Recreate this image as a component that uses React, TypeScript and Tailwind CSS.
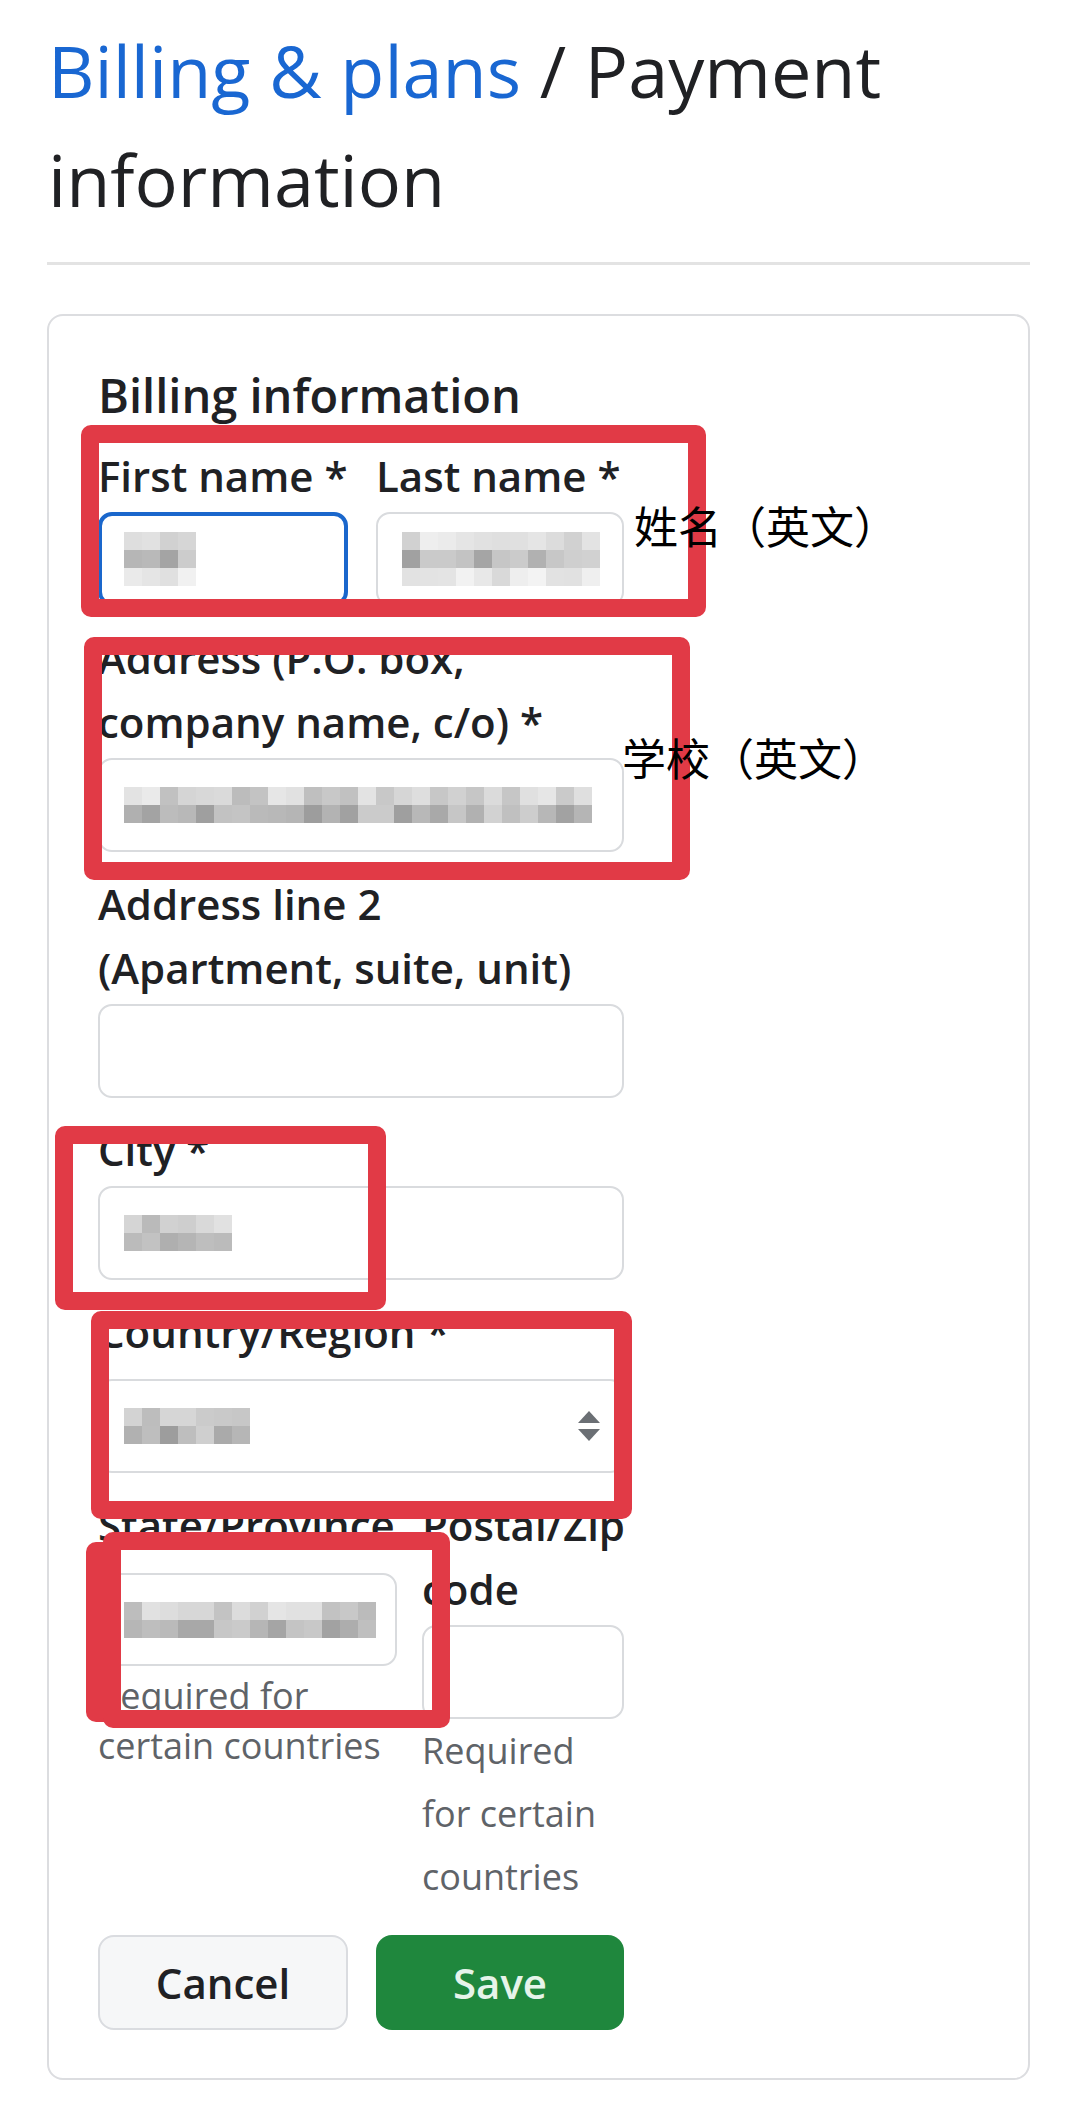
import type { ReactNode } from 'react';

// blurred (pixelated) field contents, like in the screenshot
const mosaic = (seed: number, cols: number, rows: number) => {
    let s = seed;
    const rnd = () => {
        s = (s * 9301 + 49297) % 233280;
        return s / 233280;
    };
    const bands = rows === 3 ? [[205, 240], [160, 210], [215, 248]] : [[185, 235], [155, 210]];
    return Array.from({ length: rows }, (_, r) =>
        Array.from({ length: cols }, () => {
            const [lo, hi] = bands[r];
            const v = Math.round(lo + rnd() * (hi - lo));
            return `rgb(${v},${v},${v})`;
        })
    );
};

const Mosaic = ({ seed, cols, rows }: { seed: number; cols: number; rows: number }) => (
    <div className="flex flex-col">
        {mosaic(seed, cols, rows).map((row, i) => (
            <div key={i} className="flex">
                {row.map((c, j) => (
                    <div key={j} className="w-[18px] h-[18px]" style={{ backgroundColor: c }} />
                ))}
            </div>
        ))}
    </div>
);

const Label = ({ children }: { children: ReactNode }) => (
    <div className="text-[42px] leading-[64px] font-semibold text-[#202124]">{children}</div>
);

const Field = ({ children, focused }: { children?: ReactNode; focused?: boolean }) => (
    <div
        className={
            focused
                ? 'mt-[4px] h-[94px] rounded-[14px] border-[4px] border-[#1a67cc] bg-white flex items-center pl-[22px]'
                : 'mt-[4px] h-[94px] rounded-[14px] border-2 border-[#d9dbde] bg-white flex items-center pl-[24px]'
        }
    >
        {children}
    </div>
);

const Help = ({ children, tall }: { children: ReactNode; tall?: boolean }) => (
    <div className={tall ? 'text-[36px] leading-[63px] text-[#5f6368]' : 'mt-[5px] text-[36px] leading-[50px] text-[#5f6368]'}>
        {children}
    </div>
);

export default function App() {
    return (
        <div className="relative w-[1077px] h-[2102px] overflow-hidden bg-white font-['Open_Sans','Liberation_Sans',sans-serif] text-[#202124]">
            {/* Header */}
            <h1 className="pt-[16px] pl-[48px] w-[1029px] text-[72px] leading-[109px] font-normal">
                <a className="text-[#1967d2]">Billing &amp; plans</a>
                <span> / Payment</span>
                <br />
                <span>information</span>
            </h1>
            <div className="mx-[47px] mt-[28px] h-[3px] bg-[#e3e3e3]" />

            {/* Card */}
            <div className="mx-[47px] mt-[49px] border-2 border-[#dcdde0] rounded-[16px] pl-[49px] pt-[48px] pb-[48px]">
                <div className="w-[526px]">
                    <h2 className="text-[47px] leading-[63px] font-semibold">Billing information</h2>

                    <div className="mt-[17px] grid grid-cols-[250px_248px] gap-x-[28px]">
                        <div>
                            <Label>First name *</Label>
                            <Field focused>
                                <Mosaic seed={7} cols={4} rows={3} />
                            </Field>
                        </div>
                        <div>
                            <Label>Last name *</Label>
                            <Field>
                                <Mosaic seed={23} cols={11} rows={3} />
                            </Field>
                        </div>
                    </div>

                    <div className="mt-[20px]">
                        <Label>Address (P.O. box, company name, c/o) *</Label>
                        <Field>
                            <Mosaic seed={41} cols={26} rows={2} />
                        </Field>
                    </div>

                    <div className="mt-[20px]">
                        <Label>Address line 2 (Apartment, suite, unit)</Label>
                        <Field />
                    </div>

                    <div className="mt-[20px]">
                        <Label>City *</Label>
                        <Field>
                            <Mosaic seed={59} cols={6} rows={2} />
                        </Field>
                    </div>

                    <div className="mt-[20px]">
                        <Label>Country/Region *</Label>
                        <div className="mt-[15px] h-[94px] rounded-[14px] border-2 border-[#d9dbde] bg-white flex items-center justify-between pl-[24px] pr-[21px]">
                            <Mosaic seed={83} cols={7} rows={2} />
                            <svg width="24" height="32" viewBox="0 0 24 32" className="text-[#6b6f74]">
                                <path d="M12 1 L23 13 L1 13 Z" fill="currentColor" />
                                <path d="M1 19 L23 19 L12 31 Z" fill="currentColor" />
                            </svg>
                        </div>
                    </div>

                    <div className="mt-[20px] grid grid-cols-[299px_202px] gap-x-[25px] items-start">
                        <div>
                            <div className="text-[42px] leading-[64px] font-semibold whitespace-nowrap">State/Province</div>
                            <div className="mt-[16px] h-[93px] rounded-[14px] border-2 border-[#d9dbde] bg-white flex items-center pl-[24px]">
                                <Mosaic seed={97} cols={14} rows={2} />
                            </div>
                            <Help>Required for certain countries</Help>
                        </div>
                        <div>
                            <div className="text-[42px] leading-[64px] font-semibold whitespace-nowrap">
                                Postal/Zip
                                <br />
                                code
                            </div>
                            <Field />
                            <Help tall>Required for certain countries</Help>
                        </div>
                    </div>

                    <div className="mt-[27px] flex gap-[28px]">
                        <button className="w-[250px] h-[95px] rounded-[16px] border-2 border-[#dadce0] bg-[#f6f7f8] text-[42px] font-semibold text-[#202124]">
                            Cancel
                        </button>
                        <button className="w-[248px] h-[95px] rounded-[16px] bg-[#1f873d] text-[42px] font-semibold text-[#e6f4ea]">
                            Save
                        </button>
                    </div>
                </div>
            </div>

            {/* Red annotation boxes */}
            <div className="absolute left-[81px] top-[425px] w-[625px] h-[192px] border-[18px] border-[#e13a46] rounded-[10px]" />
            <div className="absolute left-[84px] top-[637px] w-[606px] h-[243px] border-[18px] border-[#e13a46] rounded-[10px]" />
            <div className="absolute left-[55px] top-[1126px] w-[331px] h-[184px] border-[18px] border-[#e13a46] rounded-[10px]" />
            <div className="absolute left-[91px] top-[1311px] w-[541px] h-[208px] border-[18px] border-[#e13a46] rounded-[10px]" />
            <div className="absolute left-[86px] top-[1542px] w-[35px] h-[180px] bg-[#e13a46] rounded-[10px]" />
            <div className="absolute left-[103px] top-[1532px] w-[347px] h-[196px] border-[18px] border-[#e13a46] rounded-[10px]" />

            {/* Annotation text */}
            <div className="absolute left-[634px] top-[503px] text-[44px] leading-[44px] text-black font-['Noto_Sans_CJK_SC',sans-serif]">
                姓名（英文）
            </div>
            <div className="absolute left-[622px] top-[735px] text-[44px] leading-[44px] text-black font-['Noto_Sans_CJK_SC',sans-serif]">
                学校（英文）
            </div>
        </div>
    );
}
